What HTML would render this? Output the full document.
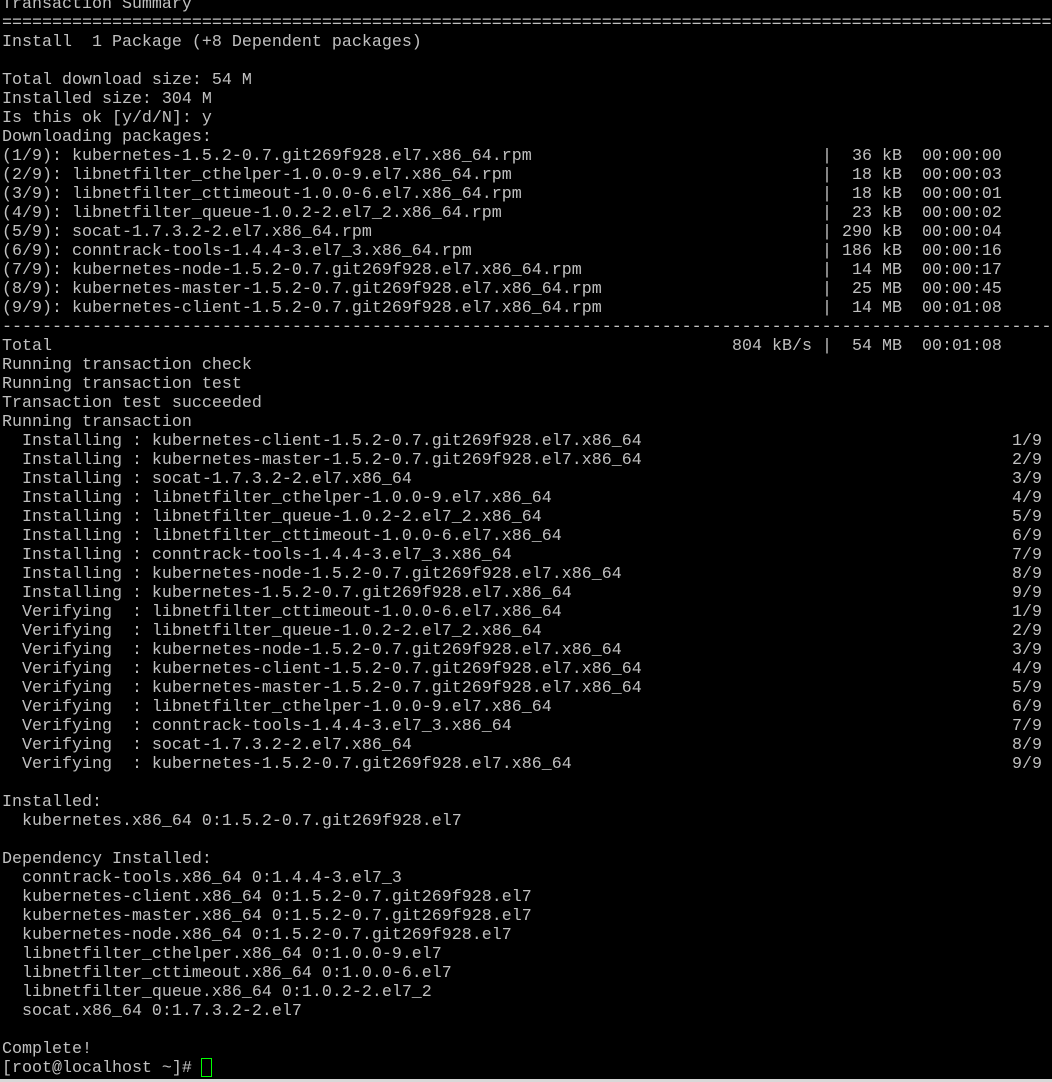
<!DOCTYPE html>
<html><head><meta charset="utf-8"><style>
html,body{margin:0;padding:0;background:#000;width:1052px;height:1082px;overflow:hidden}
#t{position:absolute;left:2px;top:-5px;font-family:"Liberation Mono",monospace;font-size:16.67px;line-height:19px;color:#c0c0c0;white-space:pre}
.r{height:19px}
.a{display:inline-block;width:820px;position:relative}
.b{display:inline-block;width:1010px}
#cur{position:absolute;left:201px;top:1058px;width:9px;height:17px;border:1px solid #00ff00}
#bl{position:absolute;left:0;top:1079px;width:1052px;height:3px;background:#d8d8d8}
</style></head><body>
<div id="t"><div class="r">Transaction Summary</div><div class="r">=========================================================================================================</div><div class="r">Install  1 Package (+8 Dependent packages)</div><div class="r"></div><div class="r">Total download size: 54 M</div><div class="r">Installed size: 304 M</div><div class="r">Is this ok [y/d/N]: y</div><div class="r">Downloading packages:</div><div class="r"><span class="a">(1/9): kubernetes-1.5.2-0.7.git269f928.el7.x86_64.rpm</span>|  36 kB  00:00:00</div><div class="r"><span class="a">(2/9): libnetfilter_cthelper-1.0.0-9.el7.x86_64.rpm</span>|  18 kB  00:00:03</div><div class="r"><span class="a">(3/9): libnetfilter_cttimeout-1.0.0-6.el7.x86_64.rpm</span>|  18 kB  00:00:01</div><div class="r"><span class="a">(4/9): libnetfilter_queue-1.0.2-2.el7_2.x86_64.rpm</span>|  23 kB  00:00:02</div><div class="r"><span class="a">(5/9): socat-1.7.3.2-2.el7.x86_64.rpm</span>| 290 kB  00:00:04</div><div class="r"><span class="a">(6/9): conntrack-tools-1.4.4-3.el7_3.x86_64.rpm</span>| 186 kB  00:00:16</div><div class="r"><span class="a">(7/9): kubernetes-node-1.5.2-0.7.git269f928.el7.x86_64.rpm</span>|  14 MB  00:00:17</div><div class="r"><span class="a">(8/9): kubernetes-master-1.5.2-0.7.git269f928.el7.x86_64.rpm</span>|  25 MB  00:00:45</div><div class="r"><span class="a">(9/9): kubernetes-client-1.5.2-0.7.git269f928.el7.x86_64.rpm</span>|  14 MB  00:01:08</div><div class="r">---------------------------------------------------------------------------------------------------------</div><div class="r"><span class="a">Total<span style="position:absolute;left:730px;top:0">804 kB/s</span></span>|  54 MB  00:01:08</div><div class="r">Running transaction check</div><div class="r">Running transaction test</div><div class="r">Transaction test succeeded</div><div class="r">Running transaction</div><div class="r"><span class="b">  Installing : kubernetes-client-1.5.2-0.7.git269f928.el7.x86_64</span>1/9</div><div class="r"><span class="b">  Installing : kubernetes-master-1.5.2-0.7.git269f928.el7.x86_64</span>2/9</div><div class="r"><span class="b">  Installing : socat-1.7.3.2-2.el7.x86_64</span>3/9</div><div class="r"><span class="b">  Installing : libnetfilter_cthelper-1.0.0-9.el7.x86_64</span>4/9</div><div class="r"><span class="b">  Installing : libnetfilter_queue-1.0.2-2.el7_2.x86_64</span>5/9</div><div class="r"><span class="b">  Installing : libnetfilter_cttimeout-1.0.0-6.el7.x86_64</span>6/9</div><div class="r"><span class="b">  Installing : conntrack-tools-1.4.4-3.el7_3.x86_64</span>7/9</div><div class="r"><span class="b">  Installing : kubernetes-node-1.5.2-0.7.git269f928.el7.x86_64</span>8/9</div><div class="r"><span class="b">  Installing : kubernetes-1.5.2-0.7.git269f928.el7.x86_64</span>9/9</div><div class="r"><span class="b">  Verifying  : libnetfilter_cttimeout-1.0.0-6.el7.x86_64</span>1/9</div><div class="r"><span class="b">  Verifying  : libnetfilter_queue-1.0.2-2.el7_2.x86_64</span>2/9</div><div class="r"><span class="b">  Verifying  : kubernetes-node-1.5.2-0.7.git269f928.el7.x86_64</span>3/9</div><div class="r"><span class="b">  Verifying  : kubernetes-client-1.5.2-0.7.git269f928.el7.x86_64</span>4/9</div><div class="r"><span class="b">  Verifying  : kubernetes-master-1.5.2-0.7.git269f928.el7.x86_64</span>5/9</div><div class="r"><span class="b">  Verifying  : libnetfilter_cthelper-1.0.0-9.el7.x86_64</span>6/9</div><div class="r"><span class="b">  Verifying  : conntrack-tools-1.4.4-3.el7_3.x86_64</span>7/9</div><div class="r"><span class="b">  Verifying  : socat-1.7.3.2-2.el7.x86_64</span>8/9</div><div class="r"><span class="b">  Verifying  : kubernetes-1.5.2-0.7.git269f928.el7.x86_64</span>9/9</div><div class="r"></div><div class="r">Installed:</div><div class="r">  kubernetes.x86_64 0:1.5.2-0.7.git269f928.el7</div><div class="r"></div><div class="r">Dependency Installed:</div><div class="r">  conntrack-tools.x86_64 0:1.4.4-3.el7_3</div><div class="r">  kubernetes-client.x86_64 0:1.5.2-0.7.git269f928.el7</div><div class="r">  kubernetes-master.x86_64 0:1.5.2-0.7.git269f928.el7</div><div class="r">  kubernetes-node.x86_64 0:1.5.2-0.7.git269f928.el7</div><div class="r">  libnetfilter_cthelper.x86_64 0:1.0.0-9.el7</div><div class="r">  libnetfilter_cttimeout.x86_64 0:1.0.0-6.el7</div><div class="r">  libnetfilter_queue.x86_64 0:1.0.2-2.el7_2</div><div class="r">  socat.x86_64 0:1.7.3.2-2.el7</div><div class="r"></div><div class="r">Complete!</div><div class="r">[root@localhost ~]# </div></div>
<div id="cur"></div>
<div id="bl"></div>
</body></html>
